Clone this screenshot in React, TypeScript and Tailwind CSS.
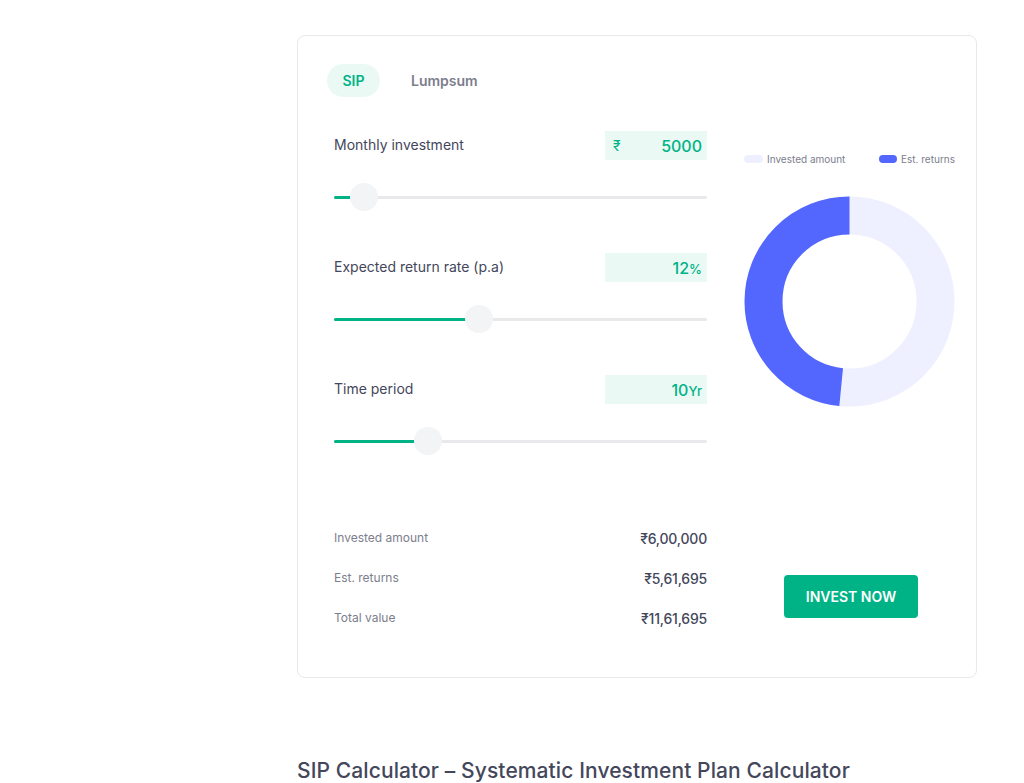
import React from 'react';

type Field = {
    label: string;
    value: string;
    prefix?: string;
    suffix?: string;
    min: number;
    max: number;
    current: number;
};

const fields: Field[] = [
    { label: 'Monthly investment', value: '5000', prefix: '₹', min: 500, max: 100000, current: 5000 },
    { label: 'Expected return rate (p.a)', value: '12', suffix: '%', min: 1, max: 30, current: 12 },
    { label: 'Time period', value: '10', suffix: 'Yr', min: 1, max: 40, current: 10 },
];

const results = [
    { label: 'Invested amount', value: '₹6,00,000' },
    { label: 'Est. returns', value: '₹5,61,695' },
    { label: 'Total value', value: '₹11,61,695' },
];

const TRACK = 373;
const THUMB = 28;

const Slider: React.FC<{ field: Field }> = ({ field }) => {
    const pct = (field.current - field.min) / (field.max - field.min);
    const center = THUMB / 2 + pct * (TRACK - THUMB);
    return (
        <div className="relative h-[28px] w-full flex items-center">
            <div className="h-[3px] w-full bg-[#e9e9eb] rounded-full" />
            <div className="absolute left-0 h-[3px] bg-[#00b386] rounded-full" style={{ width: center }} />
            <div
                className="absolute top-0 h-[28px] w-[28px] rounded-full bg-[#f3f4f6]"
                style={{ left: center - THUMB / 2 }}
            />
        </div>
    );
};

const Donut: React.FC = () => {
    const invested = 600000;
    const total = 1161695;
    const r = 86;
    const c = 2 * Math.PI * r;
    const returnsLen = c * (1 - invested / total);
    return (
        <svg width="211" height="211" viewBox="0 0 211 211">
            <circle cx="105.5" cy="105.5" r={r} fill="none" stroke="#eef0ff" strokeWidth="38" />
            <circle
                cx="105.5"
                cy="105.5"
                r={r}
                fill="none"
                stroke="#5367ff"
                strokeWidth="38"
                strokeDasharray={`${returnsLen} ${c}`}
                transform="rotate(-90 105.5 105.5) scale(1 -1) translate(0 -211)"
            />
        </svg>
    );
};

const App: React.FC = () => {
    return (
        <div className="min-h-screen w-full bg-white text-[#44475b]" style={{ fontFamily: 'Inter, "Noto Sans", sans-serif' }}>
            <div className="ml-[297px] pt-[35px]">
                <div className="w-[680px] rounded-lg border border-[#e9e9eb] pl-[29px] pr-[21px] pt-[28px] pb-[49px]">
                    <div className="flex items-center gap-[31px]">
                        <button className="h-[33px] w-[53px] rounded-full bg-[#ebf9f5] text-[#00b386] text-sm font-semibold">SIP</button>
                        <button className="h-[33px] text-[#7c7e8c] text-sm font-semibold">Lumpsum</button>
                    </div>

                    <div className="flex mt-[34px] pl-[7px]">
                        <div className="w-[373px] shrink-0 flex flex-col">
                            {fields.map((f, i) => (
                                <div key={f.label} className={i > 0 ? 'mt-[42px]' : ''}>
                                    <div className="flex items-center justify-between h-[29px]">
                                        <span className="text-[14px] leading-[20px] -mt-[2px]">{f.label}</span>
                                        <div className="w-[102px] h-[29px] bg-[#ebf9f5] flex items-center justify-between pl-[8px] pr-[5px] text-[#00b386]">
                                            <span className="text-[14px]">{f.prefix ?? ''}</span>
                                            <span className="text-[16px] font-medium">
                                                {f.value}
                                                {f.suffix && <span className="text-[13px] font-medium">{f.suffix}</span>}
                                            </span>
                                        </div>
                                    </div>
                                    <div className="mt-[23px]">
                                        <Slider field={f} />
                                    </div>
                                </div>
                            ))}

                            <div className="mt-[73px] flex flex-col gap-[20px]">
                                {results.map((r) => (
                                    <div key={r.label} className="flex items-center justify-between h-[20px]">
                                        <span className="text-[12px] text-[#7c7e8c]">{r.label}</span>
                                        <span className="text-[14px] font-medium tracking-[-0.2px]">{r.value}</span>
                                    </div>
                                ))}
                            </div>
                        </div>

                        <div className="ml-[37px] w-[211px] shrink-0 flex flex-col items-center">
                            <div className="mt-[22px] w-full flex items-center justify-between h-[12px] text-[10px] text-[#7c7e8c]">
                                <div className="flex items-center gap-[4px]">
                                    <span className="w-[19px] h-[8px] rounded-full bg-[#eef0ff]" />
                                    <span>Invested amount</span>
                                </div>
                                <div className="flex items-center gap-[4px]">
                                    <span className="w-[18px] h-[8px] rounded-full bg-[#5367ff]" />
                                    <span>Est. returns</span>
                                </div>
                            </div>
                            <div className="mt-[31px]">
                                <Donut />
                            </div>
                            <button className="mt-[168px] ml-[3px] w-[134px] h-[43px] rounded bg-[#00b386] text-white text-[14px] font-semibold uppercase">
                                Invest now
                            </button>
                        </div>
                    </div>
                </div>

                <h2 className="mt-[80px] text-[21px] leading-[26px] font-medium tracking-[0.1px]">SIP Calculator – Systematic Investment Plan Calculator</h2>
            </div>
        </div>
    );
};

export default App;
